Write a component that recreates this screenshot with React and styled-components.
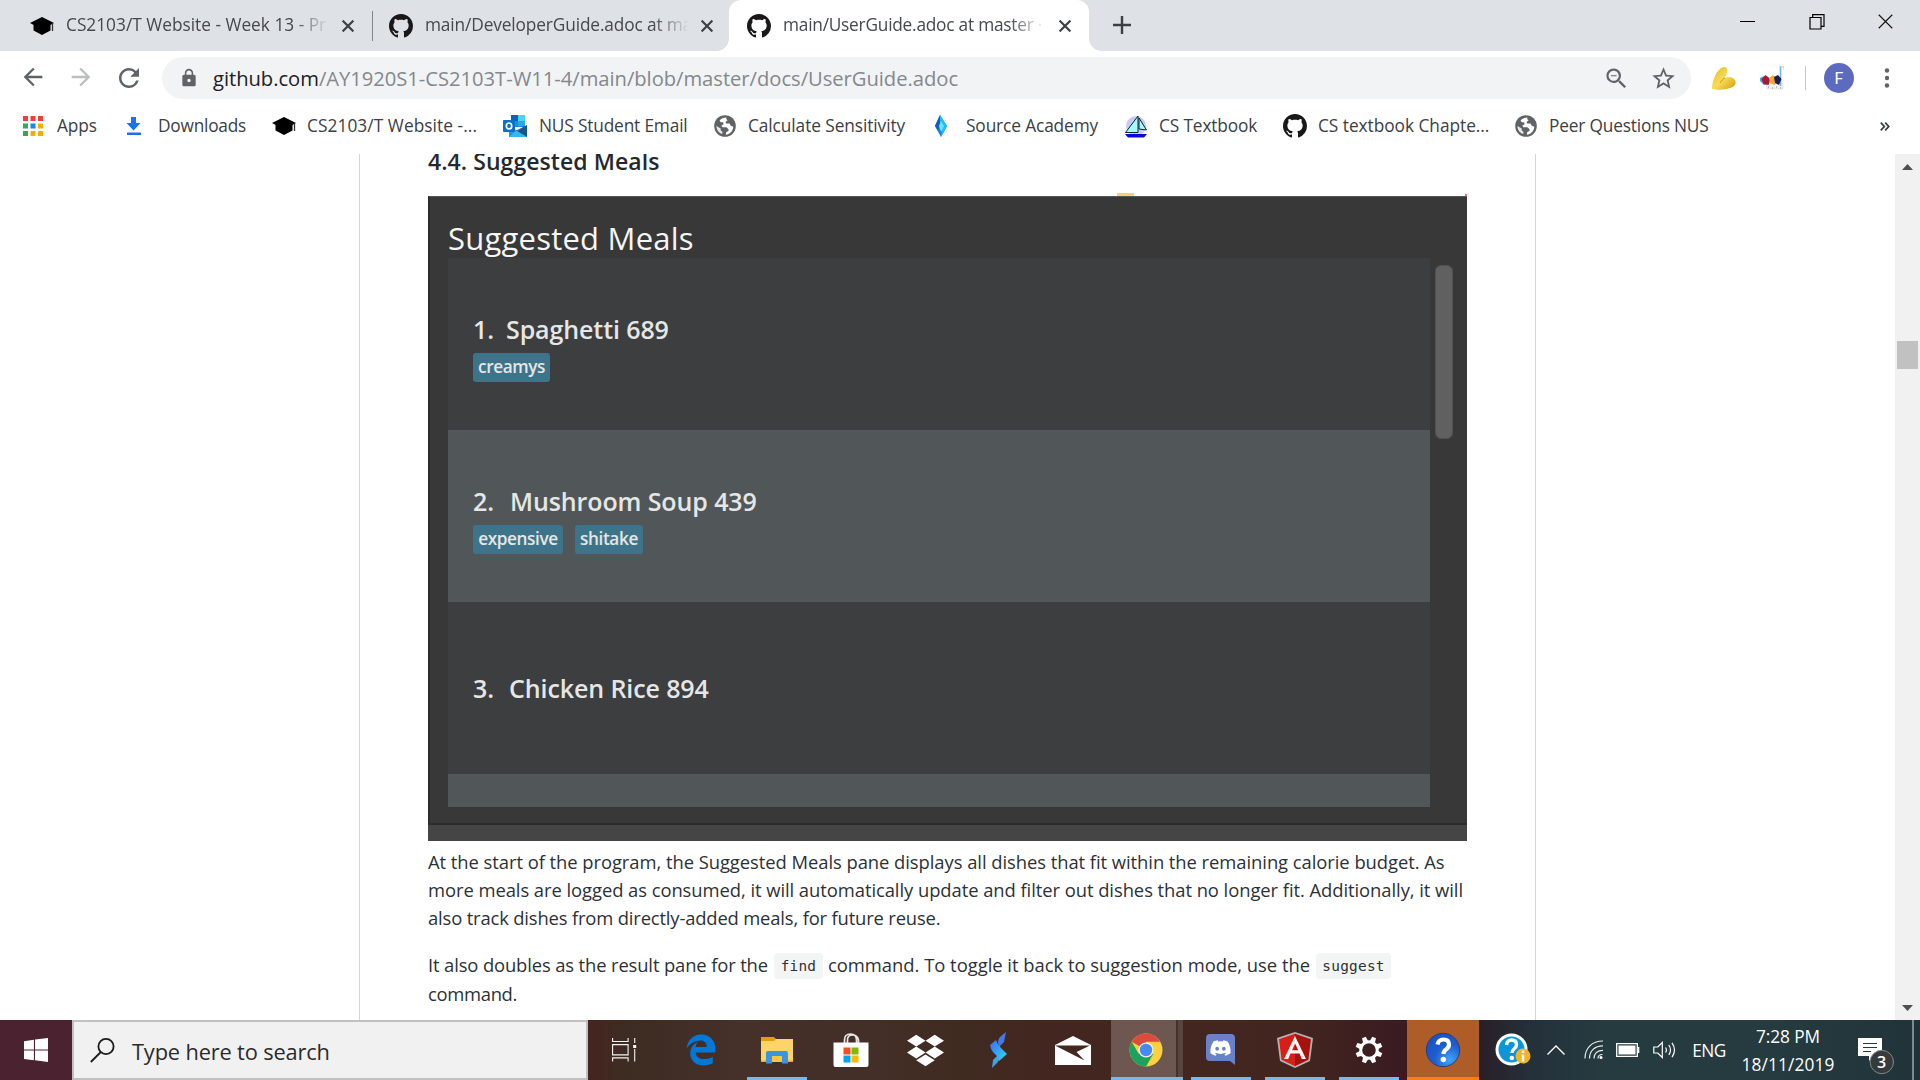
import React from "react";
import styled, { createGlobalStyle } from "styled-components";
import {
  MdArrowBack, MdArrowForward, MdRefresh, MdLock, MdStarBorder, MdOutlineZoomOut,
} from "react-icons/md";
import { FaDropbox, FaDiscord, FaEdgeLegacy } from "react-icons/fa";

const GlobalStyle = createGlobalStyle`
  * { box-sizing: border-box; }
  body { margin: 0; background: #fff; overflow: hidden; }
  svg { display: block; flex: none; }
`;

const ui = `"Open Sans", "Noto Sans", sans-serif`;

/* ---------- shell ---------- */

const Screen = styled.div`
  width: 1920px;
  height: 1080px;
  display: flex;
  flex-direction: column;
  overflow: hidden;
  background: #fff;
  font-family: ${ui};
`;

const Label = styled.span`
  display: block;
  white-space: pre;
  letter-spacing: ${(p) => p.$track || 0}px;
`;

/* ---------- tab strip ---------- */

const TabStrip = styled.header`
  height: 51px;
  flex: none;
  display: flex;
  align-items: stretch;
  background: #dee1e6;
`;

const Tab = styled.div`
  position: relative;
  display: flex;
  align-items: center;
  width: ${(p) => p.$width}px;
  padding-left: ${(p) => p.$inset}px;
  color: #45484c;
  background: ${(p) => (p.$active ? "#fff" : "transparent")};
  border-radius: ${(p) => (p.$active ? "12px 12px 0 0" : "0")};

  &::before,
  &::after {
    content: "";
    display: ${(p) => (p.$active ? "block" : "none")};
    position: absolute;
    bottom: 0;
    width: 12px;
    height: 12px;
  }
  &::before {
    left: -12px;
    background: radial-gradient(circle at 0 0, transparent 11.5px, #fff 12px);
  }
  &::after {
    right: -12px;
    background: radial-gradient(circle at 100% 0, transparent 11.5px, #fff 12px);
  }
`;

const TabTitle = styled(Label)`
  width: ${(p) => p.$width}px;
  margin-left: ${(p) => p.$gap || 12}px;
  margin-top: -1px;
  font-size: 17.3px;
  line-height: 26px;
  -webkit-mask-image: linear-gradient(to right, #000 calc(100% - 36px), transparent);
  mask-image: linear-gradient(to right, #000 calc(100% - 36px), transparent);
`;

const TabClose = styled.span`
  display: flex;
  margin-left: ${(p) => p.$gap}px;
`;

const TabDivider = styled.span`
  width: 1px;
  height: 30px;
  align-self: center;
  background: #80868b;
`;

const NewTab = styled.span`
  display: flex;
  align-items: center;
  margin-left: 24px;
  padding-bottom: 1px;
`;

const WindowControls = styled.div`
  display: flex;
  margin-left: auto;
`;

const WindowControl = styled.span`
  width: 69px;
  height: 43px;
  display: flex;
  align-items: center;
  justify-content: center;
`;

/* ---------- toolbar ---------- */

const Toolbar = styled.nav`
  height: 54px;
  flex: none;
  display: flex;
  align-items: center;
  color: #5f6368;
`;

const NavIcon = styled.span`
  width: 48px;
  display: flex;
  justify-content: center;
  color: ${(p) => (p.$dim ? "#bcbec1" : "#5f6368")};
`;

const NavGroup = styled.div`
  display: flex;
  padding-left: 9px;
  width: 162px;
`;

const AddressBar = styled.div`
  width: 1529px;
  height: 42px;
  border-radius: 21px;
  display: flex;
  align-items: center;
  padding: 0 14px 0 17px;
  background: #f1f3f4;
`;

const Url = styled(Label)`
  margin-left: 14px;
  font-size: 20.2px;
  line-height: 30px;
  color: #84888c;
`;

const UrlHost = styled.span`
  color: #202124;
`;

const AddressActions = styled.div`
  display: flex;
  gap: 20px;
  margin-left: auto;
`;

const Extensions = styled.div`
  display: flex;
  align-items: center;
  gap: 24px;
  margin-left: 21px;
`;

const ToolbarDivider = styled.span`
  width: 1px;
  height: 24px;
  margin-left: 21px;
  background: #c4c7ca;
`;

const Avatar = styled.span`
  width: 30px;
  height: 30px;
  margin: 0 30px 0 18px;
  border-radius: 50%;
  display: flex;
  align-items: center;
  justify-content: center;
  background: #5c6bc0;
  color: #fff;
  font: 400 16px Roboto, sans-serif;
`;

/* ---------- bookmarks ---------- */

const BookmarkBar = styled.nav`
  height: 49px;
  flex: none;
  display: flex;
  align-items: flex-start;
  padding: 6px 0 0 18px;
`;

const Bookmark = styled.a`
  width: ${(p) => p.$width}px;
  height: 30px;
  display: flex;
  align-items: center;
  color: #3c4043;
  font-size: 17.3px;
  line-height: 28px;
`;

const BookmarkIcon = styled.span`
  width: 30px;
  margin-right: ${(p) => p.$gap}px;
  display: flex;
  justify-content: center;
`;

/* ---------- page ---------- */

const Viewport = styled.main`
  height: 866px;
  flex: none;
  display: flex;
  overflow: hidden;
`;

const Article = styled.article`
  width: 1177px;
  margin-left: 359px;
  padding: 0 68px;
  border-left: 1px solid #d1d5da;
  border-right: 1px solid #d1d5da;
`;

const Heading = styled.h3`
  height: 40px;
  margin: -10px 0 9px;
  font-size: 23px;
  font-weight: 600;
  line-height: 35px;
  letter-spacing: 0.07px;
  color: #24292e;
`;

const Paragraph = styled.p`
  margin: ${(p) => p.$gap}px -20px 0 0;
  font-size: 18.4px;
  color: #2c3136;
`;

const Line = styled.span`
  display: flex;
  height: ${(p) => p.$height || 28}px;
  line-height: 28px;
`;

const Code = styled.code`
  width: ${(p) => p.$width}px;
  height: 26px;
  margin: 2px 5px 0 6px;
  border-radius: 4px;
  background: #f3f4f4;
  font: 14.4px/26px "DejaVu Sans Mono", monospace;
  letter-spacing: 0.25px;
  text-align: center;
`;

/* ---------- meals pane ---------- */

const FlagRow = styled.div`
  height: 3px;
  padding: 0 0 0 689px;
  width: 1039px;
  display: flex;
  justify-content: space-between;
`;

const YellowFlag = styled.span`
  width: 17px;
  height: 3px;
  background: #f8cf76;
`;

const RedFlag = styled.span`
  width: 2px;
  height: 2px;
  margin-top: 1px;
  background: #ff6a70;
`;

const Pane = styled.section`
  width: 1039px;
  height: 645px;
  display: flex;
  flex-direction: column;
  background: #454545;
`;

const PaneBody = styled.div`
  height: 629px;
  padding: 22px 0 0 18px;
  border-top: 1px solid #555;
  border-left: 2px solid #2c2c2c;
  border-bottom: 2px solid #2c2c2c;
  background: #383838;
`;

const PaneTitle = styled(Label)`
  height: 39px;
  font-size: 31px;
  line-height: 38px;
  color: #f5f5f5;
`;

const PaneContent = styled.div`
  display: flex;
  gap: 5px;
`;

const MealList = styled.div`
  width: 982px;
  height: 549px;
  overflow: hidden;
`;

const MealRow = styled.div`
  height: 172px;
  display: flex;
  flex-direction: column;
  justify-content: center;
  padding: ${(p) => (p.$tagged ? 7 : 2)}px 0 0 25px;
  background: ${(p) => (p.$alt ? "#515658" : "#3c3e3f")};
`;

const MealName = styled.div`
  display: flex;
  height: 33px;
  font-size: 25px;
  font-weight: 600;
  line-height: 30px;
  color: #e6e6e6;
`;

const MealIndex = styled.span`
  width: ${(p) => p.$width}px;
`;

const Tags = styled.div`
  display: flex;
  gap: 12px;
  padding-top: 6px;
`;

const Tag = styled.span`
  width: ${(p) => p.$width}px;
  height: 29px;
  border-radius: 3px;
  display: flex;
  justify-content: center;
  background: #3e7489;
  color: #e6e6e6;
  font-size: 17.2px;
  font-weight: 600;
  line-height: 28px;
  letter-spacing: -0.4px;
`;

const PaneThumb = styled.div`
  width: 18px;
  height: 174px;
  margin-top: 7px;
  border-radius: 6px;
  border: 1px solid #505050;
  background: #606060;
`;

/* ---------- page scrollbar ---------- */

const Scrollbar = styled.div`
  width: 25px;
  margin-left: auto;
  display: flex;
  flex-direction: column;
  align-items: center;
  justify-content: space-between;
  padding: 10px 0 9px;
  background: #f1f1f1;
`;

const ScrollTrack = styled.div`
  flex: 1;
  padding-top: 171px;
`;

const ScrollThumb = styled.div`
  width: 21px;
  height: 28px;
  background: #c1c1c1;
`;

/* ---------- taskbar ---------- */

const Taskbar = styled.footer`
  height: 60px;
  flex: none;
  display: flex;
  color: #fff;
  background: linear-gradient(
    to right,
    #4a2230 0, #4a2230 72px, #46251f 588px, #3d2c22 625px, #45302a 740px, #432f27 870px,
    #402b21 960px, #43261f 1060px, #42251f 1300px, #3a1a22 1410px, #2a1f28 1482px,
    #24303a 1530px, #253b40 1600px, #253b40 1780px, #213338 1920px
  );
`;

const StartButton = styled.span`
  width: 72px;
  display: flex;
  align-items: center;
  justify-content: center;
`;

const SearchBox = styled.div`
  width: 516px;
  border: 2px solid #c0c0c0;
  display: flex;
  align-items: center;
  padding-left: 16px;
  gap: 17px;
  background: #f1f1f1;
  color: #2b2b2b;
  font-size: 21.8px;
`;

const SearchLabel = styled(Label)`
  line-height: 32px;
  margin-top: 4px;
`;

const AppButtons = styled.div`
  display: flex;
  gap: 2px;
`;

const AppButton = styled.span`
  width: ${(p) => p.$width || 72}px;
  display: flex;
  align-items: center;
  justify-content: center;
  padding-right: ${(p) => p.$nudge || 0}px;
  background: ${(p) => p.$fill || "transparent"};
  box-shadow: ${(p) => (p.$bar ? `inset 0 -3px 0 ${p.$bar}` : "none")};
`;

const RunningApp = styled(AppButton)`
  background: linear-gradient(#76b9ed, #76b9ed) center bottom / 60px 3px no-repeat;
`;

const ChromeButton = styled(AppButton)`
  padding-right: 2px;
  background: linear-gradient(to right, #6d5750 0 65px, #41322c 65px 67px, #58463e 67px);
`;

const Tray = styled.div`
  display: flex;
  flex: 1;
  padding-left: 12px;
`;

const TrayItem = styled.span`
  width: ${(p) => p.$width}px;
  display: flex;
  align-items: center;
  justify-content: center;
  font-size: 17.3px;
`;

const NoticeItem = styled(TrayItem)`
  padding: 11px 0 0 6px;
`;

const Clock = styled.div`
  width: 104px;
  display: flex;
  flex-direction: column;
  align-items: center;
  padding-top: 3px;
  font-size: 17.3px;
  line-height: 28px;
`;

const ShowDesktop = styled.span`
  width: 8px;
  margin-left: auto;
  border-left: 2px solid #7e8a8d;
`;

/* ---------- drawings ---------- */

const GithubMark = ({ size = 24 }) => (
  <svg width={size} height={size} viewBox="0 0 16 16" fill="#191717">
    <path d="M8 0C3.58 0 0 3.58 0 8c0 3.54 2.29 6.53 5.47 7.59.4.07.55-.17.55-.38 0-.19-.01-.82-.01-1.49-2.01.37-2.53-.49-2.69-.94-.09-.23-.48-.94-.82-1.13-.28-.15-.68-.52-.01-.53.63-.01 1.08.58 1.23.82.72 1.21 1.87.87 2.33.66.07-.52.28-.87.51-1.07-1.78-.2-3.64-.89-3.64-3.95 0-.87.31-1.59.82-2.15-.08-.2-.36-1.02.08-2.12 0 0 .67-.21 2.2.82.64-.18 1.32-.27 2-.27s1.36.09 2 .27c1.53-1.04 2.2-.82 2.2-.82.44 1.1.16 1.92.08 2.12.51.56.82 1.27.82 2.15 0 3.07-1.87 3.75-3.65 3.95.29.25.54.73.54 1.48 0 1.07-.01 1.93-.01 2.2 0 .21.15.46.55.38A8.01 8.01 0 0 0 16 8c0-4.42-3.58-8-8-8z" />
  </svg>
);

const GradCap = () => (
  <svg width="26" height="20" viewBox="0 0 26 20" fill="#000">
    <path d="M13 1l12 6-12 6.500L1 7z" />
    <path d="M4.500 8.500h17v6L13 19l-8.500-4.500z" />
    <path d="M23.500 7.500V15" stroke="#333" strokeWidth="1.300" />
  </svg>
);

const Globe = () => (
  <svg width="22" height="22" viewBox="0 0 22 22">
    <circle cx="11" cy="11" r="10.800" fill="#5f6368" />
    <path d="M12.500 2.500c-3 .2-5.500 1-7 3.200l1.500 1.600h2.300v2.200l-2 1.200 1.200 1.500h4l2 2v1.800l-2.200 1-.5 2.700c3.800-.3 7.300-3.500 7.500-8l-2.500-.9-1.300-2.300h-3.300l-.6-1.500 2-1.700-1.500-1.300z" fill="#fff" />
    <path d="M2.400 11c0 3.600 2.200 6.800 5.800 8l.3-2.200-1.800-1.400v-1.800z" fill="#fff" opacity=".85" />
  </svg>
);

const Cross = ({ size = 12, stroke = 2.2, color = "#3c4043" }) => (
  <svg width={size} height={size} viewBox="0 0 12 12" stroke={color} strokeWidth={stroke}>
    <path d="M.6.6l10.8 10.8M11.4.6L.6 11.4" />
  </svg>
);

const Plus = () => (
  <svg width="18" height="18" stroke="#3c4043" strokeWidth="2.4"><path d="M9 0v18M0 9h18" /></svg>
);

const MenuDots = () => (
  <svg width="6" height="20" viewBox="0 0 6 20" fill="#5f6368">
    <circle cx="3" cy="2.500" r="2.200" /><circle cx="3" cy="10" r="2.200" /><circle cx="3" cy="17.500" r="2.200" />
  </svg>
);

const AppsGrid = () => (
  <svg width="20" height="20">
    {["#ea4335", "#ea4335", "#ea4335", "#34a853", "#1a84f0", "#f9ab00", "#34a853", "#f9ab00", "#f9ab00"].map((c, i) => (
      <rect key={i} x={(i % 3) * 7.5} y={Math.floor(i / 3) * 7.5} width="5" height="5" fill={c} />
    ))}
  </svg>
);

const DownloadGlyph = () => (
  <svg width="16" height="18" fill="#1a73e8"><path d="M5 0h5v6h4.5L7.5 13.500.5 6H5zM1 15.500h14V18H1z" /></svg>
);

const Outlook = () => (
  <svg width="24" height="22" viewBox="0 0 24 22">
    <path d="M8 0h14v12H8z" fill="#1490df" />
    <path d="M15 0h7v6h-7z" fill="#50d0f5" /><path d="M8 0h7v6H8z" fill="#0a64b8" />
    <path d="M15 6h7v5h-7z" fill="#28a8ea" />
    <path d="M6 11l9 5 9-6v12H6z" fill="#1a9ae0" />
    <path d="M24 10v12L13 15.500z" fill="#123f75" opacity=".75" />
    <path d="M6 22l18 0-11-6.500z" fill="#36b5f0" />
    <rect y="5" width="12" height="12" rx="1" fill="#0a70c8" />
    <ellipse cx="6" cy="11" rx="2.700" ry="3" fill="none" stroke="#fff" strokeWidth="1.700" />
  </svg>
);

const SourceGem = () => (
  <svg width="14" height="22" viewBox="0 0 14 22">
    <path d="M6 0l7 11-6 11L1 11z" fill="#1d7fe0" />
    <path d="M6 0l7 11-6 11 1-8-2-5z" fill="#18c0ff" /><path d="M6 0L1 11l3 5 2-8z" fill="#1060c4" />
    <path d="M7 6l3 5-3 6-2-6z" fill="#6fe3ff" />
  </svg>
);

const Sailboat = () => (
  <svg width="24" height="23" viewBox="0 0 24 23">
    <circle cx="12" cy="11" r="10" fill="#c9c9f7" />
    <path d="M14 1L1.500 17.500H14z" fill="#a2fbf6" stroke="#123" strokeWidth="1" />
    <path d="M15 3l7.500 12-7.500-1z" fill="#a2fbf6" stroke="#123" strokeWidth="1" />
    <path d="M1 19h22l-3 3.500H4z" fill="#0808d8" />
  </svg>
);

const Chevrons = () => (
  <svg width="10" height="9" fill="none" stroke="#3c4043" strokeWidth="1.800"><path d="M.8.600l3.500 3.900L.8 8.400M5.200.600l3.500 3.900-3.500 3.900" /></svg>
);

const Muscle = () => (
  <svg width="24" height="23" viewBox="0 0 24 23">
    <defs>
      <linearGradient id="flex" x1="0" y1="0" x2="1" y2="1">
        <stop offset="0" stopColor="#e8b81c" /><stop offset=".5" stopColor="#f8dc5c" /><stop offset="1" stopColor="#d69c08" />
      </linearGradient>
    </defs>
    <path d="M0 22C0 14 4 5 8 2c2-2 6-3 7 0 1 3-1 6-2 9 3-2 8-1 10 2 2 4-1 7-5 8-6 2-12 2-18 1z" fill="url(#flex)" />
    <path d="M13 11c-2 1-4 3-5 5" stroke="#c99510" strokeWidth="1" fill="none" />
  </svg>
);

const PixelBadge = () => (
  <svg width="24" height="24" viewBox="0 0 24 24">
    <path d="M6 17h17v6H7z" fill="#f1f1f1" stroke="#d8d8d8" strokeWidth=".6" />
    <path d="M20.500 0v20" stroke="#6bb8dd" strokeWidth="1.600" /><path d="M20 .8h4v3" stroke="#ccc" fill="none" />
    <path d="M0 12l4-2 4 8-4 1-4-4z" fill="#4aa7dc" />
    <path d="M1.500 13l4-4 5 4-2 6-5-1z" fill="#a81838" />
    <path d="M9 12l4-3 4 4-2 6-5-2z" fill="#f2a92c" />
    <path d="M14 11l4-2 3.500 4-2.500 6-4-2z" fill="#1e1c58" />
    <path d="M8 21h1M12 22h1M16 21h1M20 22h1" stroke="#888" />
  </svg>
);

const Triangle = ({ down }) => (
  <svg width="11" height="6" fill="#505050"><path d={down ? "M0 0h11L5.500 6z" : "M0 6h11L5.500 0z"} /></svg>
);

const WindowsLogo = () => (
  <svg width="24" height="24" viewBox="0 0 24 24" fill="#fff">
    <path d="M0 3.200l9.900-1.400v9.700H0zM11 1.600L24 0v11.500H11zM0 12.600h9.900v9.700L0 20.900zM11 12.600h13V24l-13-1.700z" />
  </svg>
);

const SearchGlass = () => (
  <svg width="25" height="25" fill="none" stroke="#1b1b1b" strokeWidth="1.800"><circle cx="16" cy="8.500" r="7.600" /><path d="M10.800 14L.8 24" /></svg>
);

const TaskView = () => (
  <svg width="25" height="24" fill="none" stroke="#f4f4f4" strokeWidth="1.100">
    <path d="M.6 0v3.500h15.500V0M.6 6.600h15.500v10.300H.6zM.6 23.500v-3.600h15.500v3.600M22.700 0v5M22.700 11v12.500" />
    <path d="M21.200 7h3v3h-3z" fill="#fff" stroke="none" />
  </svg>
);

const Folder = () => (
  <svg width="32" height="27" viewBox="0 0 32 27">
    <path d="M0 0h13l2 2v3H0z" fill="#e0a106" /><path d="M0 4h13l2-2h17v23H0z" fill="#fdd467" />
    <path d="M0 23.500h32V25H0z" fill="#e5ae2e" />
    <path d="M5 26.500V16q0-2 2-2h18q2 0 2 2v10.500h-6V19H11v7.500z" fill="#3a95de" /><path d="M11 19h10v6H11z" fill="#f9c640" />
  </svg>
);

const StoreBag = () => (
  <svg width="36" height="35" viewBox="0 0 36 35">
    <path d="M11.500 10V7q0-6 6-6t6 6v3M14.500 10V7q0-5 5-5t6 5v3" fill="none" stroke="#e8e8e8" strokeWidth="1.700" />
    <path d="M.5 9.500h35V32q0 2-2 2h-31q-2 0-2-2z" fill="#fff" />
    <path d="M10.500 14.500h7v7h-7z" fill="#f25022" /><path d="M18.500 14.500h7v7h-7z" fill="#7fba00" />
    <path d="M10.500 22.500h7v7h-7z" fill="#00a4ef" /><path d="M18.500 22.500h7v7h-7z" fill="#ffb900" />
  </svg>
);

const BlueBolt = () => (
  <svg width="20" height="36" viewBox="0 0 20 36">
    <defs>
      <linearGradient id="bolt" x1="0" y1="0" x2="1" y2="1">
        <stop offset="0" stopColor="#3e68f5" /><stop offset="1" stopColor="#2ce0ee" />
      </linearGradient>
    </defs>
    <path d="M17 0l-2 10-5 5-1-5q0-3 2-5z" fill="#4579ea" />
    <path d="M1 13l6-5q1 4 5 8l6 6-8 7q-1-4-3-6-5-4-6-10z" fill="url(#bolt)" />
    <path d="M3 36l1-8 5-5 1 4q0 2-2 4z" fill="#3fa3ea" />
  </svg>
);

const MailGlyph = () => (
  <svg width="36" height="29" viewBox="0 0 36 29">
    <path d="M18 0l18 9v20H0V9z" fill="#fff" />
    <path d="M0 9.500h35L21.500 16l8 8.500z" fill="#43281f" />
  </svg>
);

const Chrome = () => (
  <svg width="34" height="34" viewBox="0 0 34 34">
    <circle cx="17" cy="17" r="16.500" fill="#fdd03e" />
    <path d="M17 17L2.700 8.800A16.500 16.500 0 0 1 31.300 8.800H17z" fill="#dd4b3e" />
    <path d="M2.700 8.800A16.500 16.500 0 0 0 17 33.500L24.200 21 17 17 9.500 20.500z" fill="#1da15f" />
    <circle cx="17" cy="17" r="7.600" fill="#f2f2f2" /><circle cx="17" cy="17" r="6.200" fill="#4688f4" />
  </svg>
);

const DiscordTile = () => (
  <svg width="30" height="32" viewBox="0 0 30 32">
    <path d="M4 0h21q4 0 4 4v27l-5-4H4q-4 0-4-4V4q0-4 4-4z" fill="#6a80c8" />
    <g transform="translate(3.500 3)"><FaDiscord size="22" color="#fff" /></g>
  </svg>
);

const AngularShield = () => (
  <svg width="36" height="36" viewBox="0 0 36 36">
    <path d="M18 0l18 6-3 23-15 7-15-7L0 6z" fill="#b3b3b3" />
    <path d="M18 1.800L2 7.200l2.600 20.600L18 34.200z" fill="#d91e18" /><path d="M18 1.800l16 5.400-2.600 20.600L18 34.200z" fill="#a6120d" />
    <path d="M18 4L7 27h4.200l2.300-5.500h9L24.800 27H29zm0 7.500l3.200 6.800h-6.200z" fill="#f5f5f5" />
  </svg>
);

const Gear = () => (
  <svg width="28" height="28" viewBox="-14 -14 28 28">
    {[0, 45, 90, 135, 180, 225, 270, 315].map((a) => (
      <path key={a} d="M-2.700-8.500l.7-5h4l.7 5z" fill="#fff" transform={`rotate(${a + 22.5})`} />
    ))}
    <circle r="8.300" fill="none" stroke="#fff" strokeWidth="3" />
  </svg>
);

const HelpOrb = () => (
  <svg width="36" height="36" viewBox="0 0 36 36">
    <defs>
      <radialGradient id="orb" cx=".7" cy=".8" r=".9"><stop offset="0" stopColor="#3fa6f5" /><stop offset=".5" stopColor="#1e5ed0" /><stop offset="1" stopColor="#1a4fc0" /></radialGradient>
    </defs>
    <circle cx="18" cy="18" r="16.700" fill="url(#orb)" stroke="#2a3f76" strokeWidth="1" />
    <path d="M12.500 12.500q1-5 6-5 5.500 0 5.500 5 0 3-3 5-2.500 1.500-2.500 4.500" fill="none" stroke="#fff" strokeWidth="4.200" />
    <circle cx="18.300" cy="27.500" r="2.700" fill="#fff" />
  </svg>
);

const HelpBadge = () => (
  <svg width="36" height="34" viewBox="0 0 36 34">
    <circle cx="16.500" cy="16.500" r="16" fill="#fff" /><circle cx="16.500" cy="16.500" r="13" fill="#0a97d9" />
    <path d="M11.500 12q.5-5 5-5 5 0 5 4.500 0 2.500-2.500 4.500-2 1.500-2 4" fill="none" stroke="#fff" strokeWidth="3.400" />
    <circle cx="16.800" cy="25" r="2.300" fill="#fff" />
    <circle cx="28" cy="23" r="7.500" fill="#f5b21f" /><path d="M28 17.500v2.600M28 21.500v7" stroke="#fff" strokeWidth="2.600" />
  </svg>
);

const TrayChevron = () => (
  <svg width="18" height="10" fill="none" stroke="#fff" strokeWidth="1.400"><path d="M.5 9.500L9 1l8.500 8.500" /></svg>
);

const Wifi = () => (
  <svg width="20" height="20" fill="none" stroke="#e8eced" strokeWidth="1.200">
    <path d="M1 18.500C1 8 8 1 19 1M5.500 18.500C5.500 11 10.500 5.800 19 5.800M10 18.500c0-5 3.500-8.200 9-8.200M14 18.500c0-2.500 2-4 4.500-4" />
    <circle cx="17" cy="17.500" r="1.500" fill="#fff" stroke="none" />
  </svg>
);

const Battery = () => (
  <svg width="24" height="14"><path d="M.7.700h20.600v12.600H.7z" fill="none" stroke="#fff" strokeWidth="1.300" /><path d="M2.500 2.500h17v9h-17z" fill="#fff" /><path d="M22.600 4v6" stroke="#fff" strokeWidth="1.400" /></svg>
);

const Speaker = () => (
  <svg width="23" height="18" fill="none" stroke="#fff" strokeWidth="1.200">
    <path d="M.8 6h4l4.500-4.500v15L4.800 12h-4zM12.500 6.500q2 2.500 0 5M15.800 4q3.400 5 0 10M19 1.800q5 7.200 0 14.400" />
  </svg>
);

const CountText = styled.text`
  font: 600 16px ${ui};
`;

const Notifications = () => (
  <svg width="38" height="38" viewBox="0 0 38 38">
    <path d="M1 1h24v18h-9l-4 5v-5H1z" fill="#fff" />
    <path d="M6 6.500h14M6 10.500h14M6 14.500h8" stroke="#26383c" strokeWidth="1.200" />
    <circle cx="24.800" cy="25" r="11.700" fill="#363a3c" stroke="#81888a" strokeWidth="1" />
    <CountText x="24.600" y="31" textAnchor="middle" fill="#fff">3</CountText>
  </svg>
);

/* ---------- data ---------- */

const bookmarks = [
  { text: "Apps", width: 101, gap: 9, icon: <AppsGrid />, track: -0.08 },
  { text: "Downloads", width: 150, gap: 9, icon: <DownloadGlyph />, track: -0.23 },
  { text: "CS2103/T Website -...", width: 231, gap: 8, icon: <GradCap />, track: 0.07 },
  { text: "NUS Student Email", width: 210, gap: 9, icon: <Outlook />, track: -0.16 },
  { text: "Calculate Sensitivity", width: 216, gap: 8, icon: <Globe />, track: -0.08 },
  { text: "Source Academy", width: 195, gap: 10, icon: <SourceGem />, track: -0.12 },
  { text: "CS Textbook", width: 159, gap: 8, icon: <Sailboat />, track: -0.13 },
  { text: "CS textbook Chapte...", width: 231, gap: 8, icon: <GithubMark />, track: -0.03 },
  { text: "Peer Questions NUS", width: 369, gap: 8, icon: <Globe />, track: -0.17 },
];

const meals = [
  { index: "1.", indent: 33, name: "Spaghetti 689", tags: [["creamys", 77]] },
  { index: "2.", indent: 37, name: "Mushroom Soup 439", tags: [["expensive", 90], ["shitake", 68]] },
  { index: "3.", indent: 36, name: "Chicken Rice 894", tags: [] },
  { tags: [] },
];

/* ---------- app ---------- */

export default function App() {
  return (
    <Screen>
      <GlobalStyle />
      <TabStrip>
        <Tab $width={372} $inset={29}>
          <GradCap />
          <TabTitle $width={263} $gap={11}>CS2103/T Website - Week 13 - Pr</TabTitle>
          <TabClose $gap={13}><Cross /></TabClose>
        </Tab>
        <TabDivider />
        <Tab $width={356} $inset={16}>
          <GithubMark />
          <TabTitle $width={264} $track={-0.13}>main/DeveloperGuide.adoc at ma</TabTitle>
          <TabClose $gap={12}><Cross /></TabClose>
        </Tab>
        <Tab $width={360} $inset={18} $active>
          <GithubMark />
          <TabTitle $width={262} $track={-0.23}>main/UserGuide.adoc at master ·</TabTitle>
          <TabClose $gap={14}><Cross /></TabClose>
        </Tab>
        <NewTab><Plus /></NewTab>
        <WindowControls>
          <WindowControl><svg width="15" height="2"><path d="M0 .5h15" stroke="#000" /></svg></WindowControl>
          <WindowControl>
            <svg width="16" height="16" fill="none" stroke="#000" strokeWidth="1.200"><path d="M1 3.500h11v11.500H1zM3.700 3.500V.700H15v11.600h-3" /></svg>
          </WindowControl>
          <WindowControl><Cross size={15} stroke={0.9} color="#111" /></WindowControl>
        </WindowControls>
      </TabStrip>

      <Toolbar>
        <NavGroup>
          <NavIcon><MdArrowBack size={28} /></NavIcon>
          <NavIcon $dim><MdArrowForward size={28} /></NavIcon>
          <NavIcon><MdRefresh size={30} /></NavIcon>
        </NavGroup>
        <AddressBar>
          <MdLock size={20} />
          <Url $track={-0.03}><UrlHost>github.com</UrlHost>/AY1920S1-CS2103T-W11-4/main/blob/master/docs/UserGuide.adoc</Url>
          <AddressActions>
            <MdOutlineZoomOut size={27} />
            <MdStarBorder size={27} />
          </AddressActions>
        </AddressBar>
        <Extensions><Muscle /><PixelBadge /></Extensions>
        <ToolbarDivider />
        <Avatar>F</Avatar>
        <MenuDots />
      </Toolbar>

      <BookmarkBar>
        {bookmarks.map((b) => (
          <Bookmark key={b.text} $width={b.width}>
            <BookmarkIcon $gap={b.gap}>{b.icon}</BookmarkIcon>
            <Label $track={b.track}>{b.text}</Label>
          </Bookmark>
        ))}
        <Bookmark $width={20}><Chevrons /></Bookmark>
      </BookmarkBar>

      <Viewport>
        <Article>
          <Heading>4.4. Suggested Meals</Heading>
          <FlagRow><YellowFlag /><RedFlag /></FlagRow>
          <Pane>
            <PaneBody>
              <PaneTitle $track={0.22}>Suggested Meals</PaneTitle>
              <PaneContent>
                <MealList>
                  {meals.map((m, i) => (
                    <MealRow key={i} $alt={i % 2 === 1} $tagged={m.tags.length > 0}>
                      {m.name && (
                        <MealName>
                          <MealIndex $width={m.indent}>{m.index}</MealIndex>
                          <Label $track={-0.1}>{m.name}</Label>
                        </MealName>
                      )}
                      {m.tags.length > 0 && (
                        <Tags>{m.tags.map(([t, w]) => <Tag key={t} $width={w}>{t}</Tag>)}</Tags>
                      )}
                    </MealRow>
                  ))}
                </MealList>
                <PaneThumb />
              </PaneContent>
            </PaneBody>
          </Pane>
          <Paragraph $gap={7}>
            <Line><Label $track={-0.05}>At the start of the program, the Suggested Meals pane displays all dishes that fit within the remaining calorie budget. As</Label></Line>
            <Line><Label $track={-0.058}>more meals are logged as consumed, it will automatically update and filter out dishes that no longer fit. Additionally, it will</Label></Line>
            <Line><Label $track={-0.16}>also track dishes from directly-added meals, for future reuse.</Label></Line>
          </Paragraph>
          <Paragraph $gap={19}>
            <Line $height={29}>
              <Label $track={-0.13}>It also doubles as the result pane for the</Label>
              <Code $width={49}>find</Code>
              <Label $track={-0.01}>command. To toggle it back to suggestion mode, use the</Label>
              <Code $width={75}>suggest</Code>
            </Line>
            <Line><Label $track={-0.3}>command.</Label></Line>
          </Paragraph>
        </Article>
        <Scrollbar>
          <Triangle />
          <ScrollTrack><ScrollThumb /></ScrollTrack>
          <Triangle down />
        </Scrollbar>
      </Viewport>

      <Taskbar>
        <StartButton><WindowsLogo /></StartButton>
        <SearchBox>
          <SearchGlass />
          <SearchLabel $track={-0.15}>Type here to search</SearchLabel>
        </SearchBox>
        <AppButtons>
          <AppButton $width={77} $nudge={4}><TaskView /></AppButton>
          <AppButton $nudge={4}><FaEdgeLegacy size={32} color="#0078d7" /></AppButton>
          <RunningApp><Folder /></RunningApp>
          <AppButton><StoreBag /></AppButton>
          <AppButton><FaDropbox size={37} /></AppButton>
          <AppButton><BlueBolt /></AppButton>
          <AppButton><MailGlyph /></AppButton>
          <ChromeButton $bar="#76b9ed"><Chrome /></ChromeButton>
          <RunningApp><DiscordTile /></RunningApp>
          <RunningApp><AngularShield /></RunningApp>
          <RunningApp><Gear /></RunningApp>
          <AppButton $fill="#ae5d28" $bar="#ff7b0a"><HelpOrb /></AppButton>
        </AppButtons>
        <Tray>
          <TrayItem $width={44}><HelpBadge /></TrayItem>
          <TrayItem $width={42}><TrayChevron /></TrayItem>
          <TrayItem $width={33}><Wifi /></TrayItem>
          <TrayItem $width={36}><Battery /></TrayItem>
          <TrayItem $width={36}><Speaker /></TrayItem>
          <TrayItem $width={54}><Label $track={-0.6}>ENG</Label></TrayItem>
          <Clock><Label $track={-0.09}>7:28 PM</Label><Label $track={0.13}>18/11/2019</Label></Clock>
          <NoticeItem $width={66}><Notifications /></NoticeItem>
          <ShowDesktop />
        </Tray>
      </Taskbar>
    </Screen>
  );
}
